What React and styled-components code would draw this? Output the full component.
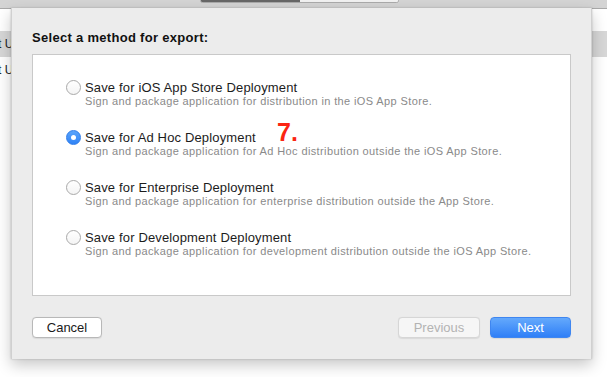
import styled, { createGlobalStyle } from "styled-components";

const GlobalStyle = createGlobalStyle`
  html, body {
    margin: 0;
    padding: 0;
    background: #ffffff;
    font-family: "Liberation Sans", Arial, sans-serif;
    -webkit-font-smoothing: antialiased;
  }
  * { box-sizing: border-box; }
`;

const methods = [
  {
    title: "Save for iOS App Store Deployment",
    desc: "Sign and package application for distribution in the iOS App Store.",
  },
  {
    title: "Save for Ad Hoc Deployment",
    desc: "Sign and package application for Ad Hoc distribution outside the iOS App Store.",
    checked: true,
    marker: "7.",
  },
  {
    title: "Save for Enterprise Deployment",
    desc: "Sign and package application for enterprise distribution outside the App Store.",
  },
  {
    title: "Save for Development Deployment",
    desc: "Sign and package application for development distribution outside the iOS App Store.",
  },
];

const App = () => {
  return (
    <Screen>
      <GlobalStyle />
      <TopBar>
        <Segments>
          <Segment $active />
          <Segment />
        </Segments>
      </TopBar>
      <Window>
        <BackRow $band>ct Upload</BackRow>
        <BackRow>ct Upload</BackRow>
        <Sheet>
          <Heading>Select a method for export:</Heading>
          <OptionsBox>
            {methods.map((m) => (
              <Option key={m.title}>
                <Radio $checked={m.checked} />
                <OptionText>
                  <OptionTitle>{m.title}</OptionTitle>
                  <OptionDesc>{m.desc}</OptionDesc>
                </OptionText>
                {m.marker && <StepMarker>{m.marker}</StepMarker>}
              </Option>
            ))}
          </OptionsBox>
          <Footer>
            <Button>Cancel</Button>
            <Spacer />
            <Button $variant="disabled">Previous</Button>
            <Button $variant="primary">Next</Button>
          </Footer>
        </Sheet>
      </Window>
    </Screen>
  );
};

const Screen = styled.div`
  width: 607px;
  height: 377px;
  overflow: hidden;
  display: flex;
  flex-direction: column;
`;

const TopBar = styled.div`
  height: 9px;
  flex-shrink: 0;
  background: #d4d4d4;
  border-bottom: 1px solid #a9a9a9;
  display: flex;
  align-items: flex-start;
`;

const Segments = styled.div`
  margin-left: 200px;
  margin-top: -2px;
  display: flex;
  height: 5px;
  border: 1px solid #ababab;
  border-radius: 3px;
  overflow: hidden;
`;

const Segment = styled.div`
  width: ${(p) => (p.$active ? "99px" : "98px")};
  background: ${(p) => (p.$active ? "#676767" : "#f1f1f1")};
`;

const Window = styled.div`
  position: relative;
  flex: 1;
  background: #ffffff;
  padding-top: 22px;
`;

const BackRow = styled.div`
  height: 26px;
  line-height: 26px;
  font-size: 12px;
  color: #222;
  text-indent: -8px;
  white-space: nowrap;
  overflow: hidden;
  background: ${(p) => (p.$band ? "#d7d7d7" : "transparent")};
`;

const Sheet = styled.div`
  position: absolute;
  top: -1px;
  left: 11px;
  width: 581px;
  height: 351px;
  background: #ececec;
  border-left: 1px solid #d0d0d0;
  border-right: 1px solid #d0d0d0;
  box-shadow: 0 6px 14px rgba(0, 0, 0, 0.22), 0 0 2px rgba(0, 0, 0, 0.2);
  padding: 22px 20px 21px 20px;
  display: flex;
  flex-direction: column;
`;

const Heading = styled.div`
  font-size: 13px;
  font-weight: 700;
  line-height: 16px;
  letter-spacing: 0.3px;
  color: #111;
  margin-bottom: 8px;
`;

const OptionsBox = styled.div`
  height: 243px;
  background: #ffffff;
  border: 1px solid #c9c9c9;
  padding: 25px 0 0 33px;
  display: flex;
  flex-direction: column;
  gap: 23px;
`;

const Option = styled.div`
  position: relative;
  display: flex;
  align-items: flex-start;
  gap: 4px;
`;

const Radio = styled.span`
  width: 15px;
  height: 15px;
  margin-top: 0px;
  flex-shrink: 0;
  border-radius: 50%;
  position: relative;
  background: ${(p) =>
    p.$checked ? "linear-gradient(#5aa4fb, #2f83f6)" : "linear-gradient(#ffffff, #f4f4f4)"};
  border: 1px solid ${(p) => (p.$checked ? "#2f7de9" : "#a9a9a9")};
  &::after {
    content: "";
    display: ${(p) => (p.$checked ? "block" : "none")};
    position: absolute;
    width: 5px;
    height: 5px;
    border-radius: 50%;
    background: #ffffff;
    left: 4px;
    top: 4px;
  }
`;

const OptionText = styled.div`
  display: flex;
  flex-direction: column;
`;

const OptionTitle = styled.div`
  font-size: 13px;
  line-height: 15px;
  letter-spacing: 0.15px;
  color: #1c1c1c;
`;

const OptionDesc = styled.div`
  font-size: 11px;
  line-height: 12px;
  letter-spacing: 0.38px;
  color: #8a8a8a;
`;

const StepMarker = styled.span`
  position: absolute;
  left: 211px;
  top: -12px;
  font-size: 25px;
  font-weight: 700;
  color: #fb2512;
  line-height: 28px;
`;

const Footer = styled.div`
  margin-top: 21px;
  display: flex;
  align-items: center;
  gap: 10px;
`;

const Spacer = styled.div`
  flex: 1;
`;

const buttonSkins = {
  default: `
    background: #ffffff;
    color: #1a1a1a;
    border: 1px solid #b8b8b8;
    width: 70px;
  `,
  disabled: `
    background: #f6f6f6;
    color: #b3b3b3;
    border: 1px solid #d6d6d6;
    width: 82px;
  `,
  primary: `
    background: linear-gradient(#64a9fc, #2f7ff7);
    color: #ffffff;
    border: 1px solid #3f86f0;
    width: 81px;
  `,
};

const Button = styled.button`
  height: 21px;
  border-radius: 4px;
  font-family: "Liberation Sans", Arial, sans-serif;
  font-size: 13px;
  line-height: 19px;
  padding: 0;
  text-align: center;
  box-shadow: 0 0.5px 1px rgba(0, 0, 0, 0.08);
  ${(p) => buttonSkins[p.$variant || "default"]}
`;

export default App;
